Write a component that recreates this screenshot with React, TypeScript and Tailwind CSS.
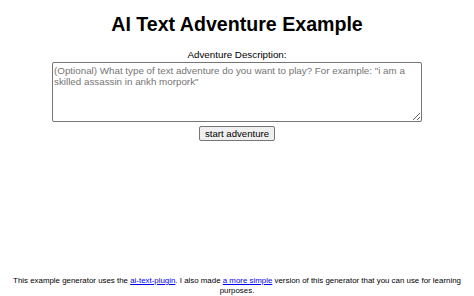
export default function App() {
  return (
    <div className="flex min-h-screen flex-col bg-white font-['Liberation_Sans',Arial,sans-serif] text-black">
      <h1 className="mt-[12px] text-center text-[19.6px] font-bold leading-[24px]">AI Text Adventure Example</h1>
      <div className="mt-[13px] text-center text-[9.8px] leading-[11px]">Adventure Description:</div>
      <div className="flex justify-center">
        <textarea
          placeholder={'(Optional) What type of text adventure do you want to play? For example: "i am a skilled assassin in ankh morpork"'}
          className="mt-[2px] h-[60px] w-[370px] resize-y rounded-[2px] border border-[#767676] px-[1px] pt-[2px] text-[9.8px] leading-[11.3px] placeholder:text-[#757575]"
        />
      </div>
      <div className="mt-[4px] flex justify-center">
        <button className="h-[15px] rounded-[2px] border border-[#767676] bg-[#efefef] px-[5px] text-[9.6px] leading-[11px]">start adventure</button>
      </div>
      <p className="mt-auto mb-[1px] px-[10px] text-center text-[7.9px] leading-[9.5px]">
        This example generator uses the <a href="#" className="text-[#0000ee] underline">ai-text-plugin</a>. I also made{' '}
        <a href="#" className="text-[#0000ee] underline">a more simple</a> version of this generator that you can use for learning purposes.
      </p>
    </div>
  )
}
